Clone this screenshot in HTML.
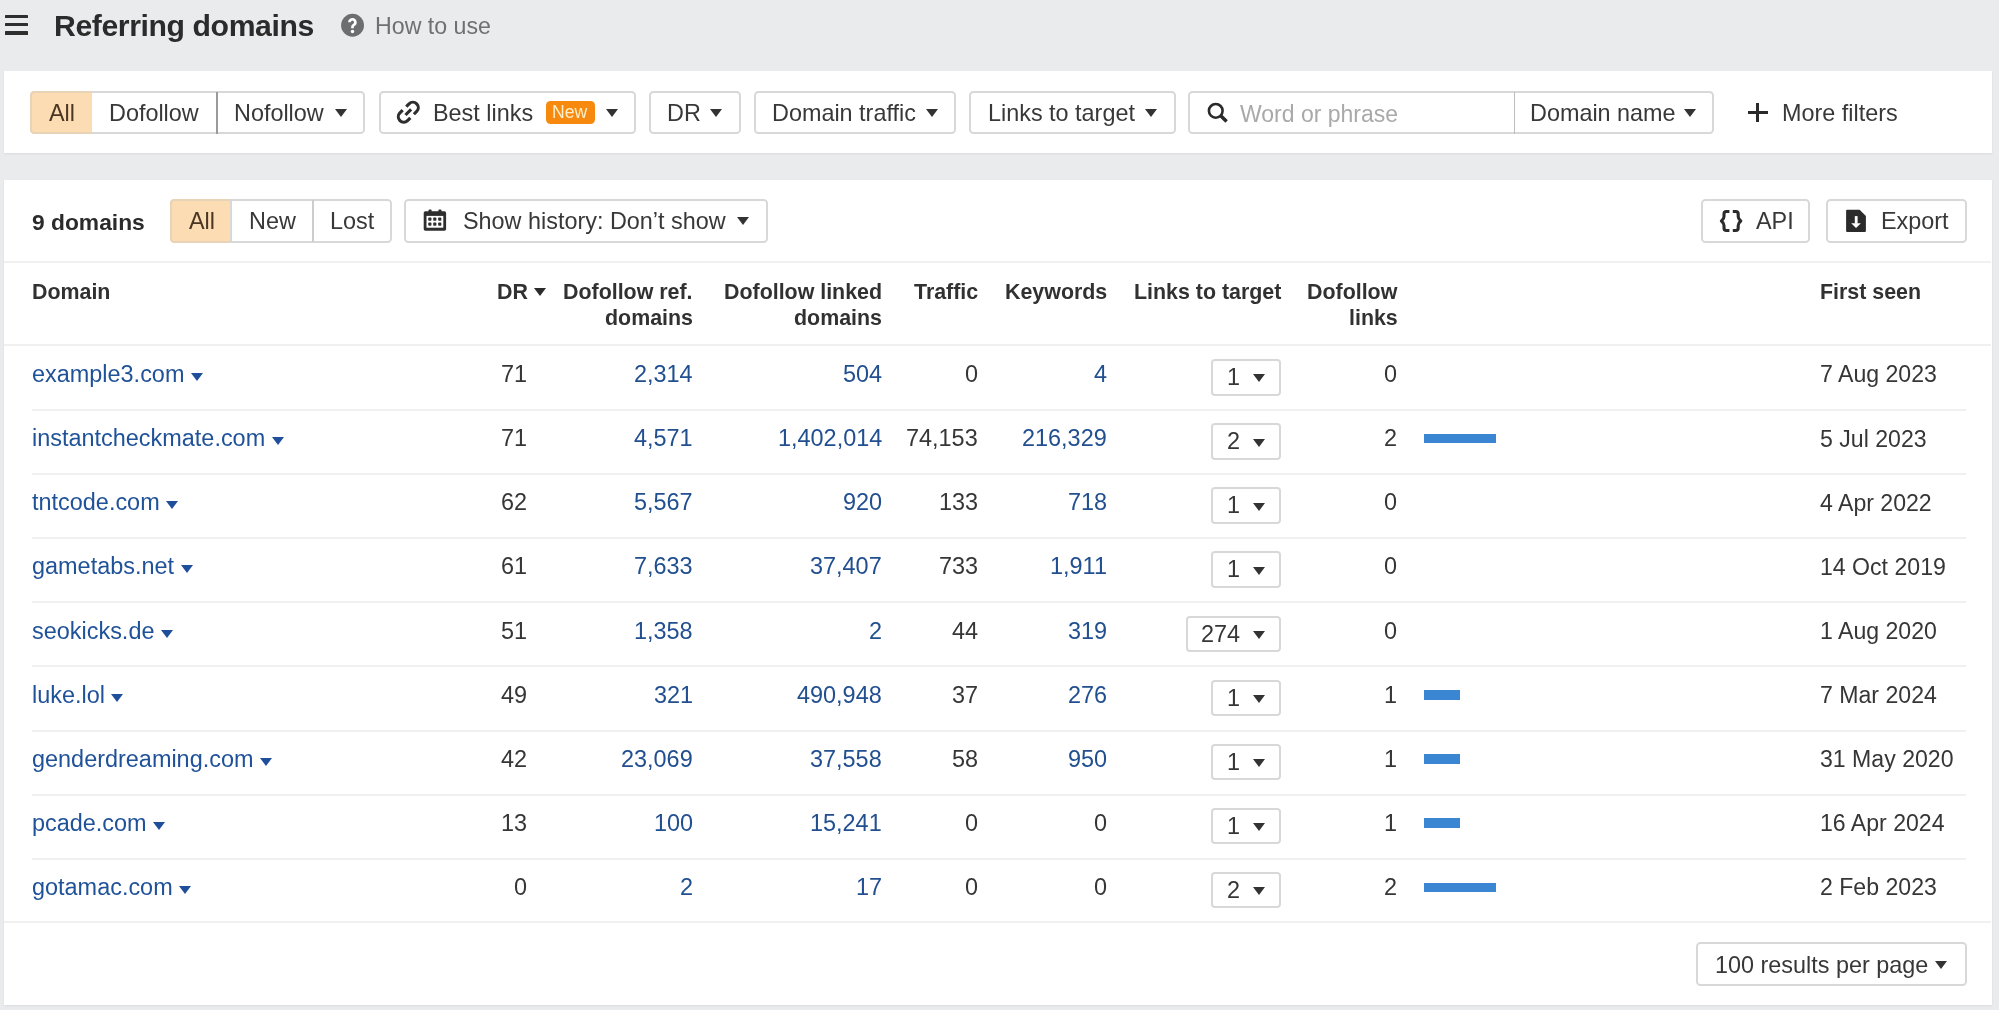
<!DOCTYPE html><html><head><meta charset="utf-8"><style>
*{box-sizing:border-box;margin:0;padding:0}
html,body{width:1999px;height:1010px;overflow:hidden;background:#eaebed;font-family:"Liberation Sans",sans-serif;color:#333}
.a{position:absolute;white-space:nowrap}
.t{position:absolute;white-space:nowrap;line-height:1;will-change:transform}
.panel{position:absolute;background:#fff;box-shadow:0 0.5px 2px rgba(0,0,0,0.07)}
.btn{position:absolute;border:2px solid #d8d8d8;border-radius:4.5px;background:#fff}
.tri{position:absolute;width:0;height:0;border-left:6px solid transparent;border-right:6px solid transparent;border-top:8px solid #333}
.hl{position:absolute;height:2px;background:#f0f0f0}
.lk{color:#1f5298}
</style></head><body>
<div class="a" style="left:5px;top:14.8px;width:23px;height:3.5px;background:#2e2e2e;border-radius:0.6px"></div>
<div class="a" style="left:5px;top:22.9px;width:23px;height:3.5px;background:#2e2e2e;border-radius:0.6px"></div>
<div class="a" style="left:5px;top:31.0px;width:23px;height:3.5px;background:#2e2e2e;border-radius:0.6px"></div>
<div class="t " style="left:54.0px;top:11.24px;font-size:30.2px;color:#2b2b2b;font-weight:bold;"><span style="letter-spacing:-0.4px">Referring domains</span></div>
<svg class="a" style="left:335px;top:8px" width="35" height="35" viewBox="0 0 35 35"><circle cx="17.55" cy="17.25" r="11.45" fill="#6d6e70"/><path d="M14.4 14.3 A3 3 0 1 1 19.5 16.4 Q17.5 17.6 17.5 18.6 V20.3" fill="none" stroke="#fff" stroke-width="2.7"/><circle cx="17.5" cy="23.6" r="1.75" fill="#fff"/></svg>
<div class="t " style="left:375px;top:14.86px;font-size:23.2px;color:#707070;">How to use</div>
<div class="panel" style="left:4.2px;top:71px;width:1987.9px;height:81.8px"></div>
<div class="btn" style="left:30.4px;top:90.9px;width:334.7px;height:43.2px;"></div>
<div class="a" style="left:30.4px;top:90.9px;width:62.1px;height:43.2px;background:#fcdcb3;border-radius:4.5px 0 0 4.5px;border:2px solid #e8d3b6;border-right:none"></div>
<div class="a" style="left:216px;top:91.5px;width:1.5px;height:42.0px;background:#9a9a9a"></div>
<div class="t " style="left:49px;top:102.19px;font-size:23.4px;color:#4a3623;">All</div>
<div class="t " style="left:108.8px;top:102.19px;font-size:23.4px;color:#383838;">Dofollow</div>
<div class="t " style="left:234.2px;top:102.19px;font-size:23.4px;color:#383838;">Nofollow</div>
<div class="tri" style="left:335px;top:109px;border-left-width:6.0px;border-right-width:6.0px;border-top:8px solid #333"></div>
<div class="btn" style="left:378.9px;top:90.9px;width:257.2px;height:43.2px;"></div>
<div class="t " style="left:432.8px;top:102.19px;font-size:23.4px;color:#383838;">Best links</div>
<div class="a" style="left:545.5px;top:101px;width:49.5px;height:22.5px;background:#f7890e;border-radius:4.5px"></div>
<div class="t " style="left:552.0px;top:103.60px;font-size:17.6px;color:#ffefc8;">New</div>
<div class="tri" style="left:605.5px;top:109px;border-left-width:6.0px;border-right-width:6.0px;border-top:8px solid #333"></div>
<svg class="a" style="left:396px;top:100px" width="24" height="24" viewBox="0 0 24 24"><g fill="none" stroke="#2e2e2e" stroke-width="3.1" transform="rotate(45 12.3 12.2)"><path d="M6.9 9.7 V5.75 A5.4 5.4 0 0 1 17.7 5.75 V9.7"/><path d="M6.9 14.7 V18.65 A5.4 5.4 0 0 0 17.7 18.65 V14.7"/><path d="M12.3 8.2 V16.2"/></g></svg>
<div class="btn" style="left:649.4px;top:90.9px;width:91.2px;height:43.2px;"></div>
<div class="t " style="left:667.0px;top:102.19px;font-size:23.4px;color:#383838;">DR</div>
<div class="tri" style="left:710px;top:109px;border-left-width:6.0px;border-right-width:6.0px;border-top:8px solid #333"></div>
<div class="btn" style="left:753.9px;top:90.9px;width:202.2px;height:43.2px;"></div>
<div class="t " style="left:772.0px;top:102.19px;font-size:23.4px;color:#383838;">Domain traffic</div>
<div class="tri" style="left:926px;top:109px;border-left-width:6.0px;border-right-width:6.0px;border-top:8px solid #333"></div>
<div class="btn" style="left:969.4px;top:90.9px;width:206.2px;height:43.2px;"></div>
<div class="t " style="left:988.0px;top:102.19px;font-size:23.4px;color:#383838;">Links to target</div>
<div class="tri" style="left:1145px;top:109px;border-left-width:6.0px;border-right-width:6.0px;border-top:8px solid #333"></div>
<div class="btn" style="left:1188.4px;top:90.9px;width:525.7px;height:43.2px;"></div>
<div class="a" style="left:1513.5px;top:91.5px;width:1.5px;height:42.0px;background:#bdbdbd"></div>
<svg class="a" style="left:1200px;top:95px" width="35" height="35" viewBox="0 0 35 35"><circle cx="15.75" cy="15.85" r="6.85" fill="none" stroke="#2a2a2a" stroke-width="2.6"/><path d="M20.5 20.6 L26.6 26.6" stroke="#2a2a2a" stroke-width="3.5"/></svg>
<div class="t " style="left:1240.3px;top:102.53px;font-size:23.0px;color:#a9a9a9;">Word or phrase</div>
<div class="t " style="left:1530.2px;top:102.19px;font-size:23.4px;color:#383838;">Domain name</div>
<div class="tri" style="left:1684px;top:109px;border-left-width:6.0px;border-right-width:6.0px;border-top:8px solid #333"></div>
<div class="a" style="left:1747.5px;top:111.1px;width:20px;height:2.8px;background:#2a2a2a"></div>
<div class="a" style="left:1756.1px;top:102.6px;width:2.8px;height:19.6px;background:#2a2a2a"></div>
<div class="t " style="left:1781.8px;top:102.19px;font-size:23.4px;color:#383838;">More filters</div>
<div class="panel" style="left:4.2px;top:179.8px;width:1987.9px;height:825px"></div>
<div class="t " style="left:31.5px;top:210.70px;font-size:22.8px;color:#2b2b2b;font-weight:bold;">9 domains</div>
<div class="btn" style="left:170.4px;top:199.4px;width:221.2px;height:43.2px;"></div>
<div class="a" style="left:170.4px;top:199.4px;width:60.6px;height:43.2px;background:#fcdcb3;border-radius:4.5px 0 0 4.5px;border:2px solid #e8d3b6;border-right:none"></div>
<div class="a" style="left:230.3px;top:199.4px;width:1.6px;height:43.2px;background:#d8d8d8"></div>
<div class="a" style="left:312px;top:200px;width:1.5px;height:42px;background:#cdcdcd"></div>
<div class="t " style="left:189px;top:210.19px;font-size:23.4px;color:#4a3623;">All</div>
<div class="t " style="left:248.5px;top:210.19px;font-size:23.4px;color:#383838;">New</div>
<div class="t " style="left:330px;top:210.19px;font-size:23.4px;color:#383838;">Lost</div>
<div class="btn" style="left:404.4px;top:199.4px;width:363.2px;height:43.2px;"></div>
<svg class="a" style="left:415px;top:202px" width="40" height="40" viewBox="0 0 40 40"><rect x="8.7" y="9.3" width="22.4" height="19.4" rx="1.6" fill="#2e2e2e"/><rect x="13.5" y="7.5" width="3.1" height="3" rx="1" fill="#2e2e2e"/><rect x="23.4" y="7.5" width="3.1" height="3" rx="1" fill="#2e2e2e"/><rect x="11.5" y="13.9" width="16.8" height="11.8" fill="#fff"/><g fill="#2e2e2e"><rect x="13.25" y="15.6" width="3.2" height="3.2" rx="0.8"/><rect x="18.2" y="15.6" width="3.2" height="3.2" rx="0.8"/><rect x="23.15" y="15.6" width="3.2" height="3.2" rx="0.8"/><rect x="13.25" y="20.6" width="3.2" height="3.2" rx="0.8"/><rect x="18.2" y="20.6" width="3.2" height="3.2" rx="0.8"/><rect x="23.15" y="20.6" width="3.2" height="3.2" rx="0.8"/></g></svg>
<div class="t " style="left:462.5px;top:210.19px;font-size:23.4px;color:#383838;">Show history: Don’t show</div>
<div class="tri" style="left:736.5px;top:217px;border-left-width:6.0px;border-right-width:6.0px;border-top:8px solid #333"></div>
<div class="btn" style="left:1701.4px;top:199.4px;width:108.2px;height:43.2px;"></div>
<svg class="a" style="left:1712px;top:202px" width="40" height="40" viewBox="0 0 40 40"><g fill="none" stroke="#2b2b2b" stroke-width="3.1" stroke-linejoin="round"><path d="M17.4 9.5 H14.4 Q12 9.5 12 12 V14.6 C12 17.2 10.4 18.2 9.4 19 C10.4 19.8 12 20.8 12 23.4 V26 Q12 28.5 14.4 28.5 H17.4"/><path d="M20.8 9.5 H23.8 Q26.2 9.5 26.2 12 V14.6 C26.2 17.2 27.8 18.2 28.8 19 C27.8 19.8 26.2 20.8 26.2 23.4 V26 Q26.2 28.5 23.8 28.5 H20.8"/></g></svg>
<div class="t " style="left:1756px;top:210.19px;font-size:23.4px;color:#383838;">API</div>
<div class="btn" style="left:1825.9px;top:199.4px;width:140.7px;height:43.2px;"></div>
<svg class="a" style="left:1836px;top:202px" width="40" height="40" viewBox="0 0 40 40"><path d="M11.1 7.7 H23.6 L29.9 14.1 V28.9 a1 1 0 0 1 -1 1 H11.1 a1 1 0 0 1 -1 -1 V8.7 a1 1 0 0 1 1 -1 Z" fill="#2b2b2b"/><rect x="18.8" y="14.1" width="2.8" height="7.6" fill="#fff"/><path d="M15.2 21.2 H24.9 L20.05 26 Z" fill="#fff"/></svg>
<div class="t " style="left:1880.5px;top:210.19px;font-size:23.4px;color:#383838;">Export</div>
<div class="hl" style="left:4.2px;top:261.3px;width:1987px"></div>
<div class="t " style="left:31.5px;top:281.88px;font-size:21.4px;color:#313131;font-weight:bold;">Domain</div>
<div class="t " style="right:1471.5px;top:281.88px;font-size:21.4px;color:#313131;font-weight:bold;">DR</div>
<div class="tri" style="left:533.5px;top:288px;border-left-width:6.0px;border-right-width:6.0px;border-top:8px solid #2b2b2b"></div>
<div class="t " style="right:1306px;top:281.88px;font-size:21.4px;color:#313131;font-weight:bold;">Dofollow ref.</div>
<div class="t " style="right:1306px;top:307.88px;font-size:21.4px;color:#313131;font-weight:bold;">domains</div>
<div class="t " style="right:1117px;top:281.88px;font-size:21.4px;color:#313131;font-weight:bold;">Dofollow linked</div>
<div class="t " style="right:1117px;top:307.88px;font-size:21.4px;color:#313131;font-weight:bold;">domains</div>
<div class="t " style="right:1021px;top:281.88px;font-size:21.4px;color:#313131;font-weight:bold;">Traffic</div>
<div class="t " style="right:892px;top:281.88px;font-size:21.4px;color:#313131;font-weight:bold;">Keywords</div>
<div class="t " style="right:718px;top:281.88px;font-size:21.4px;color:#313131;font-weight:bold;">Links to target</div>
<div class="t " style="right:601.5px;top:281.88px;font-size:21.4px;color:#313131;font-weight:bold;">Dofollow</div>
<div class="t " style="right:601.5px;top:307.88px;font-size:21.4px;color:#313131;font-weight:bold;">links</div>
<div class="t " style="left:1820px;top:281.88px;font-size:21.4px;color:#313131;font-weight:bold;">First seen</div>
<div class="hl" style="left:4.2px;top:343.5px;width:1987px"></div>
<div class="t lk" id="d0" style="left:31.5px;top:363.10px;font-size:23.45px">example3.com<span style="display:inline-block;width:0;height:0;border-left:6.3px solid transparent;border-right:6.3px solid transparent;border-top:8.4px solid #1f4f9a;margin-left:6.5px;vertical-align:0.6px"></span></div>
<div class="t " style="right:1471.5px;top:363.15px;font-size:23.45px;color:#363636;">71</div>
<div class="t " style="right:1306px;top:363.15px;font-size:23.45px;color:#214f8f;">2,314</div>
<div class="t " style="right:1117px;top:363.15px;font-size:23.45px;color:#214f8f;">504</div>
<div class="t " style="right:1021px;top:363.15px;font-size:23.45px;color:#363636;">0</div>
<div class="t " style="right:892px;top:363.15px;font-size:23.45px;color:#214f8f;">4</div>
<div class="btn" style="left:1211.4px;top:359.09999999999997px;width:69.7px;height:36.59999999999998px;border-radius:4px"></div>
<div class="t " style="left:1226.5px;top:366.15px;font-size:23.45px;color:#363636;">1</div>
<div class="tri" style="left:1252.9px;top:374.4px;border-left-width:6.5px;border-right-width:6.5px;border-top:8.3px solid #333"></div>
<div class="t " style="right:601.5px;top:363.15px;font-size:23.45px;color:#363636;">0</div>
<div class="t " style="left:1820px;top:363.45px;font-size:23.1px;color:#363636;">7 Aug 2023</div>
<div class="hl" style="left:32px;top:409.00px;width:1934px"></div>
<div class="t lk" id="d1" style="left:31.5px;top:427.20px;font-size:23.45px">instantcheckmate.com<span style="display:inline-block;width:0;height:0;border-left:6.3px solid transparent;border-right:6.3px solid transparent;border-top:8.4px solid #1f4f9a;margin-left:6.5px;vertical-align:0.6px"></span></div>
<div class="t " style="right:1471.5px;top:427.25px;font-size:23.45px;color:#363636;">71</div>
<div class="t " style="right:1306px;top:427.25px;font-size:23.45px;color:#214f8f;">4,571</div>
<div class="t " style="right:1117px;top:427.25px;font-size:23.45px;color:#214f8f;">1,402,014</div>
<div class="t " style="right:1021px;top:427.25px;font-size:23.45px;color:#363636;">74,153</div>
<div class="t " style="right:892px;top:427.25px;font-size:23.45px;color:#214f8f;">216,329</div>
<div class="btn" style="left:1211.4px;top:423.2px;width:69.7px;height:36.59999999999998px;border-radius:4px"></div>
<div class="t " style="left:1226.5px;top:430.25px;font-size:23.45px;color:#363636;">2</div>
<div class="tri" style="left:1252.9px;top:438.5px;border-left-width:6.5px;border-right-width:6.5px;border-top:8.3px solid #333"></div>
<div class="t " style="right:601.5px;top:427.25px;font-size:23.45px;color:#363636;">2</div>
<div class="a" style="left:1424px;top:433.80px;width:72px;height:9.5px;background:#3a86d2"></div>
<div class="t " style="left:1820px;top:427.55px;font-size:23.1px;color:#363636;">5 Jul 2023</div>
<div class="hl" style="left:32px;top:473.10px;width:1934px"></div>
<div class="t lk" id="d2" style="left:31.5px;top:491.30px;font-size:23.45px">tntcode.com<span style="display:inline-block;width:0;height:0;border-left:6.3px solid transparent;border-right:6.3px solid transparent;border-top:8.4px solid #1f4f9a;margin-left:6.5px;vertical-align:0.6px"></span></div>
<div class="t " style="right:1471.5px;top:491.35px;font-size:23.45px;color:#363636;">62</div>
<div class="t " style="right:1306px;top:491.35px;font-size:23.45px;color:#214f8f;">5,567</div>
<div class="t " style="right:1117px;top:491.35px;font-size:23.45px;color:#214f8f;">920</div>
<div class="t " style="right:1021px;top:491.35px;font-size:23.45px;color:#363636;">133</div>
<div class="t " style="right:892px;top:491.35px;font-size:23.45px;color:#214f8f;">718</div>
<div class="btn" style="left:1211.4px;top:487.29999999999995px;width:69.7px;height:36.59999999999998px;border-radius:4px"></div>
<div class="t " style="left:1226.5px;top:494.35px;font-size:23.45px;color:#363636;">1</div>
<div class="tri" style="left:1252.9px;top:502.59999999999997px;border-left-width:6.5px;border-right-width:6.5px;border-top:8.3px solid #333"></div>
<div class="t " style="right:601.5px;top:491.35px;font-size:23.45px;color:#363636;">0</div>
<div class="t " style="left:1820px;top:491.65px;font-size:23.1px;color:#363636;">4 Apr 2022</div>
<div class="hl" style="left:32px;top:537.20px;width:1934px"></div>
<div class="t lk" id="d3" style="left:31.5px;top:555.40px;font-size:23.45px">gametabs.net<span style="display:inline-block;width:0;height:0;border-left:6.3px solid transparent;border-right:6.3px solid transparent;border-top:8.4px solid #1f4f9a;margin-left:6.5px;vertical-align:0.6px"></span></div>
<div class="t " style="right:1471.5px;top:555.45px;font-size:23.45px;color:#363636;">61</div>
<div class="t " style="right:1306px;top:555.45px;font-size:23.45px;color:#214f8f;">7,633</div>
<div class="t " style="right:1117px;top:555.45px;font-size:23.45px;color:#214f8f;">37,407</div>
<div class="t " style="right:1021px;top:555.45px;font-size:23.45px;color:#363636;">733</div>
<div class="t " style="right:892px;top:555.45px;font-size:23.45px;color:#214f8f;">1,911</div>
<div class="btn" style="left:1211.4px;top:551.4px;width:69.7px;height:36.59999999999998px;border-radius:4px"></div>
<div class="t " style="left:1226.5px;top:558.45px;font-size:23.45px;color:#363636;">1</div>
<div class="tri" style="left:1252.9px;top:566.6999999999999px;border-left-width:6.5px;border-right-width:6.5px;border-top:8.3px solid #333"></div>
<div class="t " style="right:601.5px;top:555.45px;font-size:23.45px;color:#363636;">0</div>
<div class="t " style="left:1820px;top:555.75px;font-size:23.1px;color:#363636;">14 Oct 2019</div>
<div class="hl" style="left:32px;top:601.30px;width:1934px"></div>
<div class="t lk" id="d4" style="left:31.5px;top:619.50px;font-size:23.45px">seokicks.de<span style="display:inline-block;width:0;height:0;border-left:6.3px solid transparent;border-right:6.3px solid transparent;border-top:8.4px solid #1f4f9a;margin-left:6.5px;vertical-align:0.6px"></span></div>
<div class="t " style="right:1471.5px;top:619.55px;font-size:23.45px;color:#363636;">51</div>
<div class="t " style="right:1306px;top:619.55px;font-size:23.45px;color:#214f8f;">1,358</div>
<div class="t " style="right:1117px;top:619.55px;font-size:23.45px;color:#214f8f;">2</div>
<div class="t " style="right:1021px;top:619.55px;font-size:23.45px;color:#363636;">44</div>
<div class="t " style="right:892px;top:619.55px;font-size:23.45px;color:#214f8f;">319</div>
<div class="btn" style="left:1185.9px;top:615.5px;width:95.2px;height:36.59999999999998px;border-radius:4px"></div>
<div class="t " style="left:1201.0px;top:622.55px;font-size:23.45px;color:#363636;">274</div>
<div class="tri" style="left:1252.9px;top:630.8px;border-left-width:6.5px;border-right-width:6.5px;border-top:8.3px solid #333"></div>
<div class="t " style="right:601.5px;top:619.55px;font-size:23.45px;color:#363636;">0</div>
<div class="t " style="left:1820px;top:619.85px;font-size:23.1px;color:#363636;">1 Aug 2020</div>
<div class="hl" style="left:32px;top:665.40px;width:1934px"></div>
<div class="t lk" id="d5" style="left:31.5px;top:683.60px;font-size:23.45px">luke.lol<span style="display:inline-block;width:0;height:0;border-left:6.3px solid transparent;border-right:6.3px solid transparent;border-top:8.4px solid #1f4f9a;margin-left:6.5px;vertical-align:0.6px"></span></div>
<div class="t " style="right:1471.5px;top:683.65px;font-size:23.45px;color:#363636;">49</div>
<div class="t " style="right:1306px;top:683.65px;font-size:23.45px;color:#214f8f;">321</div>
<div class="t " style="right:1117px;top:683.65px;font-size:23.45px;color:#214f8f;">490,948</div>
<div class="t " style="right:1021px;top:683.65px;font-size:23.45px;color:#363636;">37</div>
<div class="t " style="right:892px;top:683.65px;font-size:23.45px;color:#214f8f;">276</div>
<div class="btn" style="left:1211.4px;top:679.6px;width:69.7px;height:36.59999999999998px;border-radius:4px"></div>
<div class="t " style="left:1226.5px;top:686.65px;font-size:23.45px;color:#363636;">1</div>
<div class="tri" style="left:1252.9px;top:694.9px;border-left-width:6.5px;border-right-width:6.5px;border-top:8.3px solid #333"></div>
<div class="t " style="right:601.5px;top:683.65px;font-size:23.45px;color:#363636;">1</div>
<div class="a" style="left:1424px;top:690.20px;width:36px;height:9.5px;background:#3a86d2"></div>
<div class="t " style="left:1820px;top:683.95px;font-size:23.1px;color:#363636;">7 Mar 2024</div>
<div class="hl" style="left:32px;top:729.50px;width:1934px"></div>
<div class="t lk" id="d6" style="left:31.5px;top:747.70px;font-size:23.45px">genderdreaming.com<span style="display:inline-block;width:0;height:0;border-left:6.3px solid transparent;border-right:6.3px solid transparent;border-top:8.4px solid #1f4f9a;margin-left:6.5px;vertical-align:0.6px"></span></div>
<div class="t " style="right:1471.5px;top:747.75px;font-size:23.45px;color:#363636;">42</div>
<div class="t " style="right:1306px;top:747.75px;font-size:23.45px;color:#214f8f;">23,069</div>
<div class="t " style="right:1117px;top:747.75px;font-size:23.45px;color:#214f8f;">37,558</div>
<div class="t " style="right:1021px;top:747.75px;font-size:23.45px;color:#363636;">58</div>
<div class="t " style="right:892px;top:747.75px;font-size:23.45px;color:#214f8f;">950</div>
<div class="btn" style="left:1211.4px;top:743.6999999999999px;width:69.7px;height:36.59999999999998px;border-radius:4px"></div>
<div class="t " style="left:1226.5px;top:750.75px;font-size:23.45px;color:#363636;">1</div>
<div class="tri" style="left:1252.9px;top:758.9999999999999px;border-left-width:6.5px;border-right-width:6.5px;border-top:8.3px solid #333"></div>
<div class="t " style="right:601.5px;top:747.75px;font-size:23.45px;color:#363636;">1</div>
<div class="a" style="left:1424px;top:754.30px;width:36px;height:9.5px;background:#3a86d2"></div>
<div class="t " style="left:1820px;top:748.05px;font-size:23.1px;color:#363636;">31 May 2020</div>
<div class="hl" style="left:32px;top:793.60px;width:1934px"></div>
<div class="t lk" id="d7" style="left:31.5px;top:811.80px;font-size:23.45px">pcade.com<span style="display:inline-block;width:0;height:0;border-left:6.3px solid transparent;border-right:6.3px solid transparent;border-top:8.4px solid #1f4f9a;margin-left:6.5px;vertical-align:0.6px"></span></div>
<div class="t " style="right:1471.5px;top:811.85px;font-size:23.45px;color:#363636;">13</div>
<div class="t " style="right:1306px;top:811.85px;font-size:23.45px;color:#214f8f;">100</div>
<div class="t " style="right:1117px;top:811.85px;font-size:23.45px;color:#214f8f;">15,241</div>
<div class="t " style="right:1021px;top:811.85px;font-size:23.45px;color:#363636;">0</div>
<div class="t " style="right:892px;top:811.85px;font-size:23.45px;color:#363636;">0</div>
<div class="btn" style="left:1211.4px;top:807.8px;width:69.7px;height:36.59999999999998px;border-radius:4px"></div>
<div class="t " style="left:1226.5px;top:814.85px;font-size:23.45px;color:#363636;">1</div>
<div class="tri" style="left:1252.9px;top:823.0999999999999px;border-left-width:6.5px;border-right-width:6.5px;border-top:8.3px solid #333"></div>
<div class="t " style="right:601.5px;top:811.85px;font-size:23.45px;color:#363636;">1</div>
<div class="a" style="left:1424px;top:818.40px;width:36px;height:9.5px;background:#3a86d2"></div>
<div class="t " style="left:1820px;top:812.15px;font-size:23.1px;color:#363636;">16 Apr 2024</div>
<div class="hl" style="left:32px;top:857.70px;width:1934px"></div>
<div class="t lk" id="d8" style="left:31.5px;top:875.90px;font-size:23.45px">gotamac.com<span style="display:inline-block;width:0;height:0;border-left:6.3px solid transparent;border-right:6.3px solid transparent;border-top:8.4px solid #1f4f9a;margin-left:6.5px;vertical-align:0.6px"></span></div>
<div class="t " style="right:1471.5px;top:875.95px;font-size:23.45px;color:#363636;">0</div>
<div class="t " style="right:1306px;top:875.95px;font-size:23.45px;color:#214f8f;">2</div>
<div class="t " style="right:1117px;top:875.95px;font-size:23.45px;color:#214f8f;">17</div>
<div class="t " style="right:1021px;top:875.95px;font-size:23.45px;color:#363636;">0</div>
<div class="t " style="right:892px;top:875.95px;font-size:23.45px;color:#363636;">0</div>
<div class="btn" style="left:1211.4px;top:871.9px;width:69.7px;height:36.59999999999998px;border-radius:4px"></div>
<div class="t " style="left:1226.5px;top:878.95px;font-size:23.45px;color:#363636;">2</div>
<div class="tri" style="left:1252.9px;top:887.1999999999999px;border-left-width:6.5px;border-right-width:6.5px;border-top:8.3px solid #333"></div>
<div class="t " style="right:601.5px;top:875.95px;font-size:23.45px;color:#363636;">2</div>
<div class="a" style="left:1424px;top:882.50px;width:72px;height:9.5px;background:#3a86d2"></div>
<div class="t " style="left:1820px;top:876.25px;font-size:23.1px;color:#363636;">2 Feb 2023</div>
<div class="hl" style="left:4.2px;top:921px;width:1987px"></div>
<div class="btn" style="left:1696.4px;top:942.4px;width:270.2px;height:43.2px;"></div>
<div class="t " style="left:1714.7px;top:953.69px;font-size:23.4px;color:#383838;">100 results per page</div>
<div class="tri" style="left:1934.7px;top:960.8px;border-left-width:6.0px;border-right-width:6.0px;border-top:8px solid #333"></div>
</body></html>
